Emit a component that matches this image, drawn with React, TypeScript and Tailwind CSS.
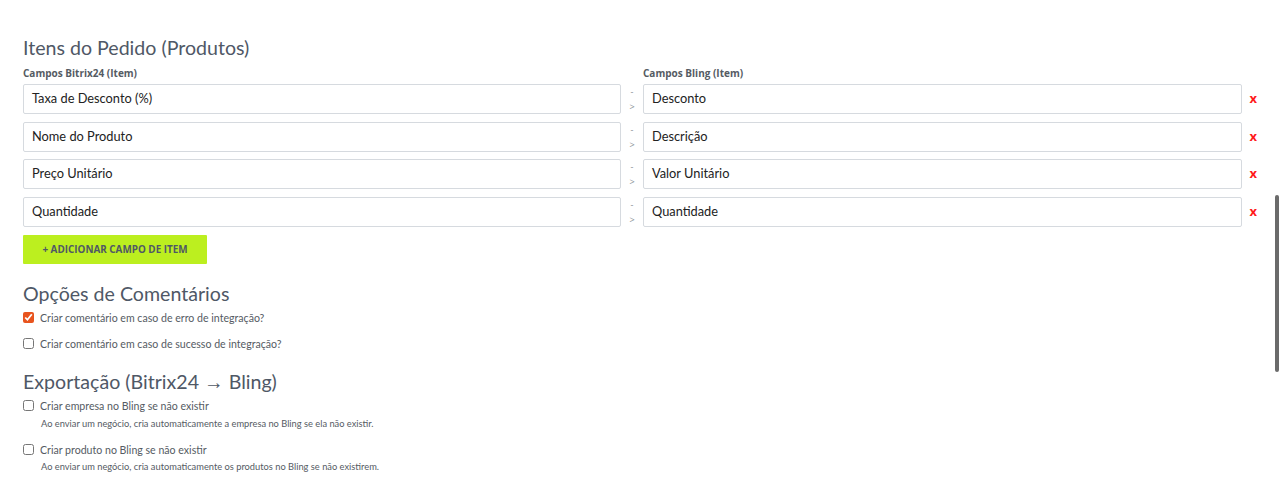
import React from "react";

const rows = [
  ["Taxa de Desconto (%)", "Desconto"],
  ["Nome do Produto", "Descrição"],
  ["Preço Unitário", "Valor Unitário"],
  ["Quantidade", "Quantidade"],
];

function Check({ checked, label }: { checked?: boolean; label: string }) {
  return (
    <label className="flex items-center h-[16px]">
      <input
        type="checkbox"
        defaultChecked={checked}
        className="w-[11px] h-[11px] m-0 accent-[#e8541e]"
      />
      <span className="ml-[6px] text-[10.6px] leading-[16px] text-[#555b63] font-['Lato',sans-serif]">{label}</span>
    </label>
  );
}

export default function App() {
  return (
    <div className="relative w-[1280px] h-[486px] overflow-hidden bg-white font-['Lato','Open_Sans',sans-serif]">
      <div className="pl-[23px] pr-[23px] pt-[35px]">
        <h2 className="text-[19.6px] leading-[26px] text-[#4f5866] font-normal">
          Itens do Pedido (Produtos)
        </h2>
        <div className="flex mt-[5px] h-[15px] items-center font-['Open_Sans',sans-serif]">
          <div className="w-[620px] text-[10px] font-bold text-[#555b63]">Campos Bitrix24 (Item)</div>
          <div className="text-[10px] font-bold text-[#555b63]">Campos Bling (Item)</div>
        </div>
        <div className="flex flex-col gap-[7.5px] mt-[3px]">
          {rows.map(([a, b]) => (
            <div key={a} className="flex items-center h-[30px]">
              <div className="w-[598px] h-[30px] border border-[#d6dadf] rounded-[2px] flex items-center pl-[8px] text-[12.8px] text-[#222]">
                {a}
              </div>
              <div className="w-[22px] flex flex-col items-center text-[9px] leading-[15px] text-[#8a8f96] font-['Open_Sans',sans-serif]">
                <span>-</span>
                <span>&gt;</span>
              </div>
              <div className="w-[599px] h-[30px] border border-[#d6dadf] rounded-[2px] flex items-center pl-[8px] text-[12.8px] text-[#222]">
                {b}
              </div>
              <div className="w-[15px] flex justify-end text-[13px] font-bold text-[#ff1a1a] font-['Open_Sans',sans-serif]">x</div>
            </div>
          ))}
        </div>
        <button className="mt-[8px] w-[184px] h-[29px] bg-[#bcef1f] text-[9.9px] font-bold text-[#4f5866] flex items-center justify-center rounded-[1px] font-['Open_Sans',sans-serif]">
          + ADICIONAR CAMPO DE ITEM
        </button>
        <h2 className="mt-[17px] text-[19.6px] leading-[26px] text-[#4f5866] font-normal">
          Opções de Comentários
        </h2>
        <div className="mt-[3px] flex flex-col gap-[10px]">
          <Check checked label="Criar comentário em caso de erro de integração?" />
          <Check label="Criar comentário em caso de sucesso de integração?" />
        </div>
        <h2 className="mt-[17px] text-[19.6px] leading-[26px] text-[#4f5866] font-normal">
          Exportação (Bitrix24 <span className="font-['Open_Sans',sans-serif]">→</span> Bling)
        </h2>
        <div className="mt-[3px]">
          <Check label="Criar empresa no Bling se não existir" />
          <div className="ml-[18px] mt-[3px] text-[9.3px] leading-[14px] text-[#555b63]">
            Ao enviar um negócio, cria automaticamente a empresa no Bling se ela não existir.
          </div>
          <div className="mt-[11px]">
            <Check label="Criar produto no Bling se não existir" />
          </div>
          <div className="ml-[18px] mt-[2px] text-[9.3px] leading-[14px] text-[#555b63]">
            Ao enviar um negócio, cria automaticamente os produtos no Bling se não existirem.
          </div>
        </div>
      </div>
      <div className="absolute right-[1px] top-[195px] w-[4px] h-[177px] rounded-full bg-[#6b6b6b]" />
    </div>
  );
}
